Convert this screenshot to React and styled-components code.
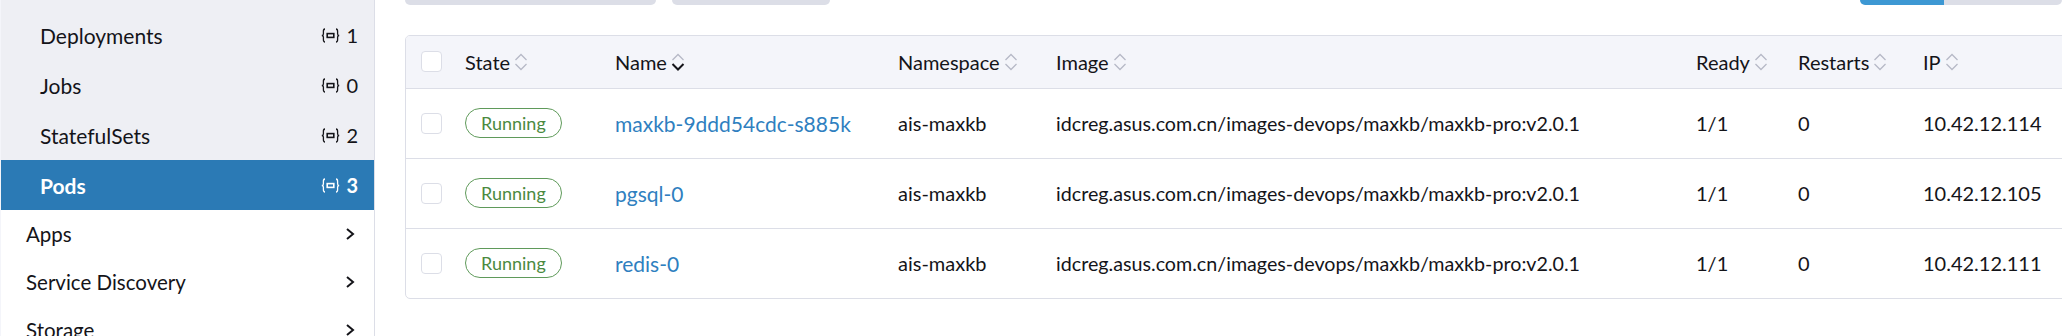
import React from "react";
import styled, { createGlobalStyle } from "styled-components";

const GlobalStyle = createGlobalStyle`
  html, body {
    margin: 0;
    padding: 0;
    background: #fff;
    overflow: hidden;
  }
  body {
    font-family: Lato, "Noto Sans", sans-serif;
    color: #141419;
  }
`;

const Layout = styled.div`
  display: flex;
  width: 2062px;
  height: 336px;
  overflow: hidden;
`;

const Sidebar = styled.nav`
  width: 375px;
  flex-shrink: 0;
  border-left: 1px solid #f4f5fa;
  border-right: 1px solid #dcdee7;
  box-sizing: border-box;
`;

const SubGroup = styled.div`
  background: #eeeff4;
  padding-top: 10px;
`;

const SubItem = styled.div`
  display: flex;
  align-items: center;
  justify-content: space-between;
  height: 50px;
  padding: 0 16px 0 39px;
  font-size: 21px;
  background: ${(p) => (p.$active ? "#2b7ab5" : "transparent")};
  color: ${(p) => (p.$active ? "#fff" : "#141419")};
  font-weight: ${(p) => (p.$active ? 700 : 400)};
`;

const Count = styled.span`
  display: flex;
  align-items: center;
  gap: 6px;
  font-size: 20px;
`;

const TopItem = styled.div`
  display: flex;
  align-items: center;
  justify-content: space-between;
  height: 48px;
  padding: 0 18px 0 25px;
  font-size: 20.5px;
  color: #141419;
`;

const Main = styled.main`
  flex: 1;
  padding: 0 0 0 30px;
  min-width: 0;
`;

const Toolbar = styled.div`
  display: flex;
  align-items: flex-end;
  margin-top: -35px;
  height: 40px;
  margin-bottom: 30px;
`;

const GrayButton = styled.div`
  width: ${(p) => p.$w}px;
  height: 40px;
  background: #dcdee7;
  border-radius: 5px;
  margin-right: 16px;
`;

const Spacer = styled.div`
  flex: 1;
`;

const SegGroup = styled.div`
  display: flex;
  height: 40px;
  width: 202px;
  border-radius: 5px;
  overflow: hidden;
`;

const Seg = styled.div`
  width: ${(p) => p.$w}px;
  background: ${(p) => (p.$active ? "#3d98d3" : "#dcdee7")};
`;

const TableWrap = styled.div`
  width: 1800px;
  border: 1px solid #dcdee7;
  border-radius: 5px;
  overflow: hidden;
`;

const Table = styled.table`
  border-collapse: collapse;
  table-layout: fixed;
  width: 100%;
  font-size: 20px;
`;

const HeadRow = styled.tr`
  height: 52px;
  background: #f4f5fa;
`;

const Th = styled.th`
  text-align: left;
  font-weight: 400;
  padding: 0 10px;
  white-space: nowrap;
  border-bottom: 1px solid #dcdee7;
`;

const Row = styled.tr`
  height: 70px;
  & + & td {
    border-top: 1px solid #dcdee7;
  }
`;

const Td = styled.td`
  padding: 0 10px;
  white-space: nowrap;
  font-size: ${(p) => p.$size || "inherit"};
`;

const CheckCell = styled.td`
  padding: 0 0 0 15px;
`;

const CheckHead = styled.th`
  padding: 0 0 0 15px;
  border-bottom: 1px solid #dcdee7;
`;

const Checkbox = styled.div`
  width: 19px;
  height: 19px;
  border: 1px solid #dcdee7;
  border-radius: 4px;
  background: #fff;
`;

const SortLabel = styled.span`
  display: inline-flex;
  align-items: center;
  gap: 3px;
`;

const Badge = styled.span`
  display: inline-flex;
  align-items: center;
  height: 28px;
  padding: 0 15px;
  border: 1px solid #5f9a5a;
  border-radius: 15px;
  color: #4b8a3f;
  font-size: 18px;
`;

const Link = styled.a`
  color: #2f7fc0;
  text-decoration: none;
  font-size: 21px;
`;

const ResourceIcon = ({ color }) => (
  <svg width="19" height="15" viewBox="0 0 19 15" fill="none" stroke={color} strokeWidth="1.3">
    <path d="M4 1 C2.4 1 2.4 2 2.4 3.5 V6 C2.4 7 1.6 7.5 0.8 7.5 C1.6 7.5 2.4 8 2.4 9 V11.5 C2.4 13 2.4 14 4 14" />
    <path d="M15 1 C16.6 1 16.6 2 16.6 3.5 V6 C16.6 7 17.4 7.5 18.2 7.5 C17.4 7.5 16.6 8 16.6 9 V11.5 C16.6 13 16.6 14 15 14" />
    <rect x="6.2" y="5.6" width="6.6" height="3.8" strokeWidth="1.6" />
  </svg>
);

const Chevron = () => (
  <svg width="12" height="14" viewBox="0 0 12 14" fill="none" stroke="#141419" strokeWidth="2">
    <path d="M3 2 L9 7 L3 12" />
  </svg>
);

const SortIcon = ({ down }) => (
  <svg width="16" height="22" viewBox="0 0 16 22" fill="none" strokeWidth="1.3">
    <path d="M2.5 9 L8 3.5 L13.5 9" stroke="#b6b9c6" />
    <path
      d="M2.5 13 L8 18.5 L13.5 13"
      stroke={down ? "#141419" : "#b6b9c6"}
      strokeWidth={down ? 2 : 1.3}
    />
  </svg>
);

const columns = [
  { label: "State", w: 150 },
  { label: "Name", w: 283, down: true },
  { label: "Namespace", w: 158 },
  { label: "Image", w: 640 },
  { label: "Ready", w: 102 },
  { label: "Restarts", w: 125 },
  { label: "IP", w: 240 },
];

const pods = [
  { name: "maxkb-9ddd54cdc-s885k", ip: "10.42.12.114" },
  { name: "pgsql-0", ip: "10.42.12.105" },
  { name: "redis-0", ip: "10.42.12.111" },
];

const subItems = [
  { label: "Deployments", count: 1 },
  { label: "Jobs", count: 0 },
  { label: "StatefulSets", count: 2 },
  { label: "Pods", count: 3, active: true },
];

export default function App() {
  return (
    <Layout>
      <GlobalStyle />
      <Sidebar>
        <SubGroup>
          {subItems.map((it) => (
            <SubItem key={it.label} $active={it.active}>
              <span>{it.label}</span>
              <Count>
                <ResourceIcon color={it.active ? "#fff" : "#141419"} />
                {it.count}
              </Count>
            </SubItem>
          ))}
        </SubGroup>
        {["Apps", "Service Discovery", "Storage"].map((l) => (
          <TopItem key={l}>
            <span>{l}</span>
            <Chevron />
          </TopItem>
        ))}
      </Sidebar>
      <Main>
        <Toolbar>
          <GrayButton $w={251} />
          <GrayButton $w={158} />
          <Spacer />
          <SegGroup>
            <Seg $w={84} $active />
            <Seg $w={118} />
          </SegGroup>
        </Toolbar>
        <TableWrap>
          <Table>
            <colgroup>
              <col style={{ width: 49 }} />
              {columns.map((c) => (
                <col key={c.label} style={{ width: c.w }} />
              ))}
              <col />
            </colgroup>
            <thead>
              <HeadRow>
                <CheckHead>
                  <Checkbox />
                </CheckHead>
                {columns.map((c) => (
                  <Th key={c.label}>
                    <SortLabel>
                      {c.label}
                      <SortIcon down={c.down} />
                    </SortLabel>
                  </Th>
                ))}
                <Th />
              </HeadRow>
            </thead>
            <tbody>
              {pods.map((p) => (
                <Row key={p.name}>
                  <CheckCell>
                    <Checkbox />
                  </CheckCell>
                  <Td>
                    <Badge>Running</Badge>
                  </Td>
                  <Td>
                    <Link href="#">{p.name}</Link>
                  </Td>
                  <Td>ais-maxkb</Td>
                  <Td $size="19.7px">idcreg.asus.com.cn/images-devops/maxkb/maxkb-pro:v2.0.1</Td>
                  <Td>1/1</Td>
                  <Td>0</Td>
                  <Td>{p.ip}</Td>
                  <Td />
                </Row>
              ))}
            </tbody>
          </Table>
        </TableWrap>
      </Main>
    </Layout>
  );
}
